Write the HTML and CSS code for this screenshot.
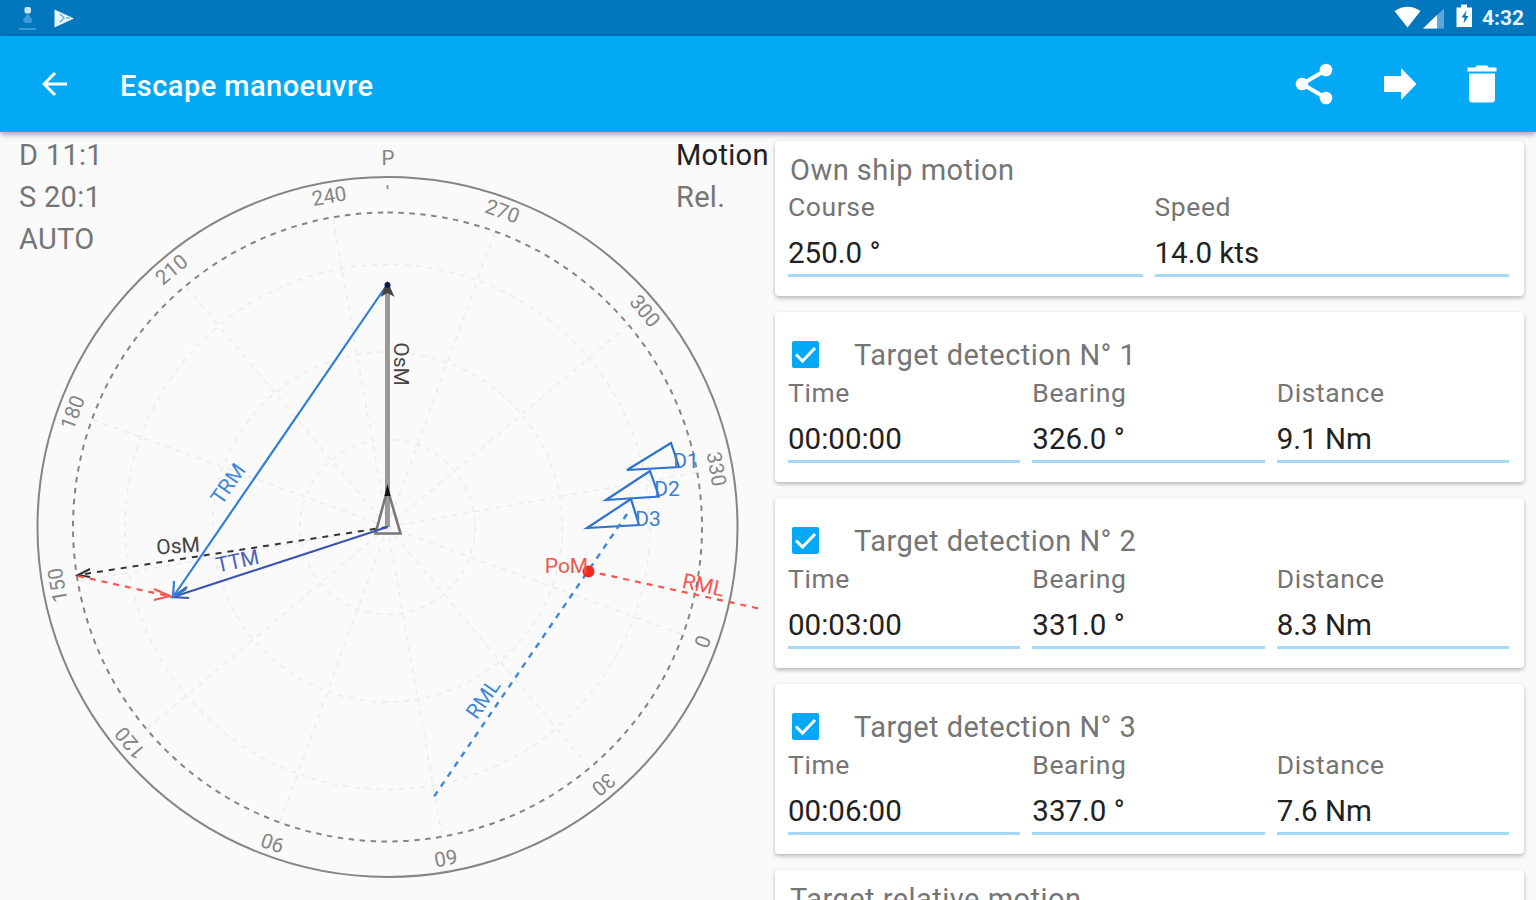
FILE: index.html
```html
<!DOCTYPE html>
<html lang="en">
<head>
    <meta charset="UTF-8">
    <meta name="viewport" content="width=device-width, initial-scale=1.0">
    <title>Escape manoeuvre</title>
    <link rel="stylesheet" href="styles.css">
</head>
<body>
    <div class="status-bar">
        <svg class="status-left" width="80" height="36" viewBox="0 0 80 36">
            <rect x="24.500" y="7" width="6.500" height="6.500" rx="2" fill="#cfe6f5"/>
            <path d="M27.700 13l5 7.500-2 2.500h-6l-2-2.500z" fill="#3d9ad2"/>
            <rect x="19" y="28" width="17" height="2" fill="#3d9ad2"/>
            <path d="M54.500 9.500L74 18.500 54.500 27.500z" fill="#e8f4fc"/>
            <path d="M60 14l4 4-4 4M66 18h4" fill="none" stroke="#6db3dd" stroke-width="1.600"/>
        </svg>
        <div class="status-right">
            <svg width="90" height="36" viewBox="0 0 90 36">
                <path d="M4.500 11Q17.500 2.500 30.500 11L17.500 27.500z" fill="#fff"/>
                <path d="M33 28.500L54 8.500v20z" fill="#5ba9d8"/>
                <path d="M33 28.500L47 15v13.500z" fill="#fff"/>
                <path d="M66.500 7.500h4.500V4.500h6V7.500H82V27H66.500z" fill="#fff"/>
                <path d="M76.500 10.500l-5 7h3l-1 6 5-7.500h-3z" fill="#0277bd"/>
            </svg>
            <span class="clock">4:32</span>
        </div>
    </div>

    <header>
        <svg class="back" width="26" height="26" viewBox="0 0 26 26">
            <path d="M25 13H2.500M13 2L2 13l11 11" fill="none" stroke="#fff" stroke-width="3"/>
        </svg>
        <h1>Escape manoeuvre</h1>
        <div class="actions">
            <svg width="38" height="42" viewBox="0 0 38 42">
                <path d="M31 7L7 21l24 14" fill="none" stroke="#fff" stroke-width="4"/>
                <circle cx="31" cy="7" r="6.300" fill="#fff"/>
                <circle cx="7" cy="21" r="6.300" fill="#fff"/>
                <circle cx="31" cy="35" r="6.300" fill="#fff"/>
            </svg>
            <svg width="34" height="32" viewBox="0 0 34 32">
                <path d="M1 8h17V0l15.500 16L18 32v-8H1z" fill="#fff"/>
            </svg>
            <svg width="30" height="38" viewBox="0 0 30 38">
                <path d="M.500 2.500H8L10 .500h10l2 2h7.500v4H.500z" fill="#fff"/>
                <path d="M2 8.500h26V34q0 3.500-3.500 3.500h-19Q2 37.500 2 34z" fill="#fff"/>
            </svg>
        </div>
    </header>

    <main>
        <section class="plot">
            <svg class="radar" width="775" height="768" viewBox="0 132 775 768">
                <!-- bearing grid, head up on course 250 -->
                <g transform="translate(387.5 527)">
                    <g class="grid">
                        <circle r="87.500"/>
                        <circle r="175"/>
                        <circle r="262.500"/>
                        <path d="M0 0V-315" transform="rotate(-10)"/>
                        <path d="M0 0V-315" transform="rotate(20)"/>
                        <path d="M0 0V-315" transform="rotate(50)"/>
                        <path d="M0 0V-315" transform="rotate(80)"/>
                        <path d="M0 0V-315" transform="rotate(110)"/>
                        <path d="M0 0V-315" transform="rotate(140)"/>
                        <path d="M0 0V-315" transform="rotate(170)"/>
                        <path d="M0 0V-315" transform="rotate(200)"/>
                        <path d="M0 0V-315" transform="rotate(230)"/>
                        <path d="M0 0V-315" transform="rotate(260)"/>
                        <path d="M0 0V-315" transform="rotate(290)"/>
                        <path d="M0 0V-315" transform="rotate(320)"/>
                    </g>
                    <circle class="range" r="314.500" transform="rotate(-90)"/>
                    <circle class="rim" r="350"/>
                    <path d="M0-342v4" stroke="#999" stroke-width="2"/>
                    <g class="bearings">
                        <text x="0.500" y="-362">P</text>
                        <text y="-329" transform="rotate(-10)">240</text>
                        <text y="-329" transform="rotate(20)">270</text>
                        <text y="-329" transform="rotate(50)">300</text>
                        <text y="-327" transform="rotate(80)">330</text>
                        <text y="-328" transform="rotate(110)">0</text>
                        <text y="-329" transform="rotate(140)">30</text>
                        <text y="-329" transform="rotate(170)">60</text>
                        <text y="-329" transform="rotate(200)">90</text>
                        <text y="-329" transform="rotate(230)">120</text>
                        <text y="-328" transform="rotate(260)">150</text>
                        <text y="-328" transform="rotate(290)">180</text>
                        <text y="-329" transform="rotate(320)">210</text>
                    </g>
                </g>

                <!-- own ship -->
                <path class="own-motion" d="M387.500 527V290"/>
                <path class="ship" d="M387.500 489L375.500 533.500H400.500z"/>
                <path d="M387.500 484l3 12h-6z" fill="#111"/>
                <path class="own-dashed" d="M387.500 527L78 575"/>
                <path class="own-head" d="M90 569L78 575l12 2"/>

                <!-- target motion -->
                <path class="ttm" d="M387.500 527L173 597M187 587l-14 10 16 1"/>
                <path class="trm" d="M387.500 284L173 597M174 581l-1 16 13-8"/>
                <path d="M387.500 281l7 16-7-4-7 4z" fill="#444"/>
                <circle cx="387.500" cy="285" r="3" fill="#0a1a4a"/>
                <path class="escape" d="M78 576L168 596"/>
                <path class="escape-head" d="M154 589l16 7-16 4"/>

                <!-- detections -->
                <g class="detection">
                    <path d="M671 443L627 470L679 467z"/>
                    <path d="M650 471L606 500L659 496.500z"/>
                    <path d="M631 499L587 528L639 525z"/>
                </g>
                <path class="rml" d="M627 514L431 801"/>
                <path class="escape" d="M588 571L761 609"/>
                <circle cx="588.500" cy="571.500" r="6" fill="#f02a1d"/>

                <g class="vector-labels">
                    <text transform="translate(394 364) rotate(90)" fill="#444">OsM</text>
                    <text transform="translate(178.500 553) rotate(-4)" fill="#444">OsM</text>
                    <text transform="translate(234 488) rotate(-55)" fill="#3d86d8">TRM</text>
                    <text transform="translate(239 568) rotate(-12)" fill="#4a62b8">TTM</text>
                    <text transform="translate(489 703) rotate(-55)" fill="#3d86d8">RML</text>
                    <text transform="translate(702 592) rotate(12.500)" fill="#f4574e">RML</text>
                    <text x="566.500" y="573" fill="#f4574e">PoM</text>
                    <text x="686" y="468" fill="#3a7fd0">D1</text>
                    <text x="667" y="496" fill="#3a7fd0">D2</text>
                    <text x="648" y="526" fill="#3a7fd0">D3</text>
                </g>
            </svg>
            <div class="scales">
                <div>D 11:1</div>
                <div>S 20:1</div>
                <div>AUTO</div>
            </div>
            <div class="motion">
                <div class="dark">Motion</div>
                <div>Rel.</div>
            </div>
        </section>

        <section class="cards">
            <div class="card own">
                <h2>Own ship motion</h2>
                <div class="fields two">
                    <label>Course<span class="value">250.0 °</span></label>
                    <label>Speed<span class="value">14.0 kts</span></label>
                </div>
            </div>

            <div class="card">
                <h2 class="checked">
                    <svg class="check" width="27" height="27" viewBox="0 0 27 27"><rect width="27" height="27" rx="2" fill="#03a9f4"/><path d="M4 13.500l6.500 6.500L23 7" fill="none" stroke="#fff" stroke-width="3"/></svg>
                    Target detection N° 1
                </h2>
                <div class="fields">
                    <label>Time<span class="value">00:00:00</span></label>
                    <label>Bearing<span class="value">326.0 °</span></label>
                    <label>Distance<span class="value">9.1 Nm</span></label>
                </div>
            </div>

            <div class="card">
                <h2 class="checked">
                    <svg class="check" width="27" height="27" viewBox="0 0 27 27"><rect width="27" height="27" rx="2" fill="#03a9f4"/><path d="M4 13.500l6.500 6.500L23 7" fill="none" stroke="#fff" stroke-width="3"/></svg>
                    Target detection N° 2
                </h2>
                <div class="fields">
                    <label>Time<span class="value">00:03:00</span></label>
                    <label>Bearing<span class="value">331.0 °</span></label>
                    <label>Distance<span class="value">8.3 Nm</span></label>
                </div>
            </div>

            <div class="card">
                <h2 class="checked">
                    <svg class="check" width="27" height="27" viewBox="0 0 27 27"><rect width="27" height="27" rx="2" fill="#03a9f4"/><path d="M4 13.500l6.500 6.500L23 7" fill="none" stroke="#fff" stroke-width="3"/></svg>
                    Target detection N° 3
                </h2>
                <div class="fields">
                    <label>Time<span class="value">00:06:00</span></label>
                    <label>Bearing<span class="value">337.0 °</span></label>
                    <label>Distance<span class="value">7.6 Nm</span></label>
                </div>
            </div>

            <div class="card">
                <h2>Target relative motion</h2>
            </div>
        </section>
    </main>
</body>
</html>
```
FILE: styles.css
```css
* {
    box-sizing: border-box;
}

body {
    margin: 0;
    height: 900px;
    overflow: hidden;
    display: flex;
    flex-direction: column;
    font-family: Roboto, "Liberation Sans", sans-serif;
    background: #fafafa;
    color: #757575;
}

.status-bar {
    flex: none;
    height: 36px;
    display: flex;
    justify-content: space-between;
    background: #0277bd;
}

.status-right {
    display: flex;
    padding-right: 12px;
}

.clock {
    width: 44px;
    line-height: 37px;
    font-size: 21px;
    font-weight: 700;
    color: #e6f3fb;
    text-align: right;
}

header {
    flex: none;
    position: relative;
    z-index: 1;
    height: 96px;
    display: flex;
    align-items: center;
    padding: 0 39px 0 42px;
    background: #03a9f4;
    box-shadow: 0 2px 6px rgba(0, 0, 0, 0.4);
}

h1 {
    margin: 4px 0 0 52px;
    font-size: 29px;
    font-weight: 500;
    letter-spacing: 0.45px;
    color: #fff;
}

.actions {
    margin-left: auto;
    display: flex;
    align-items: center;
    gap: 50px;
}

main {
    flex: 1;
    min-height: 0;
    display: flex;
}

.plot {
    flex: none;
    position: relative;
    width: 775px;
}

.radar {
    display: block;
}

.grid {
    fill: none;
    stroke: #ececec;
    stroke-width: 1.5;
    stroke-dasharray: 5.5 5.5;
}

.range {
    fill: none;
    stroke: #858585;
    stroke-width: 2;
    stroke-dasharray: 5.5 5.48;
}

.rim {
    fill: none;
    stroke: #858585;
    stroke-width: 2;
}

.bearings {
    font-size: 20.5px;
    fill: #858585;
    text-anchor: middle;
}

.own-motion {
    stroke: #999;
    stroke-width: 5;
}

.ship {
    fill: none;
    stroke: #777;
    stroke-width: 2.6;
}

.own-dashed, .own-head {
    fill: none;
    stroke: #333;
    stroke-width: 2;
}

.own-dashed {
    stroke-dasharray: 6 6;
}

.ttm, .trm {
    fill: none;
    stroke: #3a55b0;
    stroke-width: 2.2;
}

.trm {
    stroke: #2f7fd8;
}

.escape, .escape-head {
    fill: none;
    stroke: #f4574e;
    stroke-width: 2.2;
}

.escape {
    stroke-dasharray: 6 6;
}

.detection {
    fill: none;
    stroke: #2f74cc;
    stroke-width: 2.2;
}

.rml {
    stroke: #3d86d8;
    stroke-width: 2.4;
    stroke-dasharray: 6 6;
}

.vector-labels {
    font-size: 21px;
    text-anchor: middle;
}

.scales, .motion {
    position: absolute;
    top: 2px;
    left: 19px;
    font-size: 29px;
    line-height: 42px;
    letter-spacing: 0.3px;
}

.motion {
    left: 676px;
}

.dark {
    color: #212121;
}

.cards {
    width: 749px;
    padding-top: 9px;
}

.card {
    height: 170px;
    margin-bottom: 16px;
    padding: 22px 15px 0 13px;
    background: #fff;
    border-radius: 4px;
    box-shadow: 0 2px 4px rgba(0, 0, 0, 0.28);
}

.card.own {
    height: 155px;
    padding-top: 7px;
}

.card:last-child {
    padding-top: 7px;
}

h2 {
    height: 42px;
    margin: 0 0 0 2px;
    line-height: 44px;
    font-size: 29px;
    font-weight: 400;
    letter-spacing: 0.47px;
}

.checked {
    display: flex;
    align-items: center;
    margin-left: 4px;
    line-height: 46px;
}

.check {
    margin: 0 35px 2px 0;
}

.fields {
    display: grid;
    grid-template-columns: repeat(3, 1fr);
    gap: 12px;
}

.fields.two {
    grid-template-columns: repeat(2, 1fr);
}

label {
    display: block;
    font-size: 26.5px;
    line-height: 34px;
    letter-spacing: 0.6px;
}

.value {
    display: block;
    height: 53px;
    line-height: 58px;
    font-size: 29.5px;
    letter-spacing: 0;
    color: #212121;
    border-bottom: 3px solid #a6d8f8;
}
```
